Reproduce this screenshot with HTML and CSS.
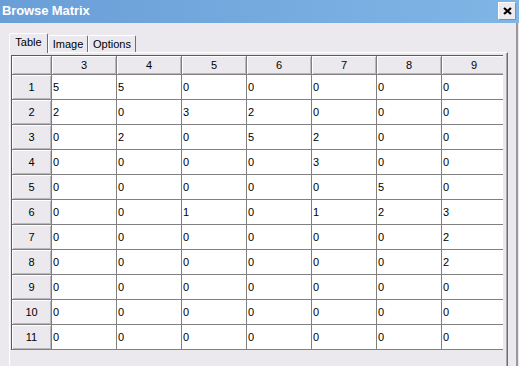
FILE: index.html
```html
<!DOCTYPE html>
<html>
<head>
<meta charset="utf-8">
<link rel="stylesheet" href="styles.css">
</head>
<body>
<div class="window">
  <div class="titlebar">
    <span class="title">Browse Matrix</span>
    <div class="close"><svg width="9" height="8" viewBox="0 0 9 8"><path d="M1 1 L8 7 M8 1 L1 7" stroke="#000" stroke-width="2.2" fill="none"/></svg></div>
  </div>
  <div class="content">
    <div class="tabs">
      <div class="tab active t1">Table</div>
      <div class="tab t2">Image</div>
      <div class="tab t3">Options</div>
    </div>
    <div class="panel">
      <div class="gridwrap">
        <div class="grid">
          <div class="hc"></div><div class="hc">3</div><div class="hc">4</div><div class="hc">5</div><div class="hc">6</div><div class="hc">7</div><div class="hc">8</div><div class="hc">9</div>
          <div class="rh">1</div><div class="c">5</div><div class="c">5</div><div class="c">0</div><div class="c">0</div><div class="c">0</div><div class="c">0</div><div class="c">0</div>
          <div class="rh">2</div><div class="c">2</div><div class="c">0</div><div class="c">3</div><div class="c">2</div><div class="c">0</div><div class="c">0</div><div class="c">0</div>
          <div class="rh">3</div><div class="c">0</div><div class="c">2</div><div class="c">0</div><div class="c">5</div><div class="c">2</div><div class="c">0</div><div class="c">0</div>
          <div class="rh">4</div><div class="c">0</div><div class="c">0</div><div class="c">0</div><div class="c">0</div><div class="c">3</div><div class="c">0</div><div class="c">0</div>
          <div class="rh">5</div><div class="c">0</div><div class="c">0</div><div class="c">0</div><div class="c">0</div><div class="c">0</div><div class="c">5</div><div class="c">0</div>
          <div class="rh">6</div><div class="c">0</div><div class="c">0</div><div class="c">1</div><div class="c">0</div><div class="c">1</div><div class="c">2</div><div class="c">3</div>
          <div class="rh">7</div><div class="c">0</div><div class="c">0</div><div class="c">0</div><div class="c">0</div><div class="c">0</div><div class="c">0</div><div class="c">2</div>
          <div class="rh">8</div><div class="c">0</div><div class="c">0</div><div class="c">0</div><div class="c">0</div><div class="c">0</div><div class="c">0</div><div class="c">2</div>
          <div class="rh">9</div><div class="c">0</div><div class="c">0</div><div class="c">0</div><div class="c">0</div><div class="c">0</div><div class="c">0</div><div class="c">0</div>
          <div class="rh">10</div><div class="c">0</div><div class="c">0</div><div class="c">0</div><div class="c">0</div><div class="c">0</div><div class="c">0</div><div class="c">0</div>
          <div class="rh">11</div><div class="c">0</div><div class="c">0</div><div class="c">0</div><div class="c">0</div><div class="c">0</div><div class="c">0</div><div class="c">0</div>
        </div>
      </div>
    </div>
  </div>
</div>
</body>
</html>
```
FILE: styles.css
```css
html, body {
  margin: 0;
  padding: 0;
}
body {
  background: #ebe9ed;
  font-family: "Liberation Sans", Arial, sans-serif;
  font-size: 11px;
  color: #000;
  width: 519px;
  height: 366px;
  overflow: hidden;
}
.window {
  width: 519px;
  height: 366px;
  display: flex;
  flex-direction: column;
}
.titlebar {
  height: 23px;
  flex: none;
  background: linear-gradient(to right, #6a9ed7, #7fb6e6);
  display: flex;
  align-items: flex-start;
  justify-content: space-between;
  padding: 0 3px 0 2px;
  box-sizing: border-box;
}
.title {
  color: #fff;
  font-weight: bold;
  font-size: 13px;
  margin-top: 3px;
  letter-spacing: -0.1px;
}
.close {
  margin-top: 2px;
  width: 18px;
  height: 18px;
  box-sizing: border-box;
  background: #ecebef;
  border: 1px solid;
  border-color: #fff #8c8c8c #8c8c8c #fff;
  display: flex;
  align-items: center;
  justify-content: center;
}
.content {
  flex: 1;
  width: 518px;
  box-sizing: border-box;
  border-right: 2px solid #9a989c;
  padding: 10px 0 0 9px;
  display: flex;
  flex-direction: column;
}
.tabs {
  display: flex;
  align-items: flex-end;
  height: 19px;
  flex: none;
  position: relative;
  z-index: 1;
}
.tab {
  box-sizing: border-box;
  height: 17px;
  border: 1px solid;
  border-bottom: none;
  border-color: #fff #6f6d72 transparent #fff;
  border-radius: 2px 2px 0 0;
  text-align: center;
  line-height: 13px;
  padding-top: 2px;
  background: #ebe9ed;
}
.tab.active {
  height: 20px;
  margin-bottom: -1px;
}
.t1 { width: 39px; }
.t2 { width: 40px; }
.t3 { width: 48px; }
.panel {
  width: 499px;
  flex: 1;
  box-sizing: border-box;
  border-top: 1px solid #fff;
  border-left: 1px solid #fff;
  border-right: 1px solid #6f6d72;
  box-shadow: inset -1px 0 0 #a9a7ab;
  padding: 2px 0 0 1px;
}
.gridwrap {
  width: 492px;
  height: 295px;
  box-sizing: border-box;
  border-left: 1px solid #5a5a5a;
  border-top: 1px solid #5a5a5a;
  overflow: hidden;
}
.grid {
  display: grid;
  width: max-content;
  grid-template-columns: 40px repeat(7, 65px);
  grid-template-rows: 19px repeat(11, 25px);
}
.hc, .rh {
  box-sizing: border-box;
  background: #ebe9ed;
  border-right: 1px solid #808080;
  border-bottom: 1px solid #808080;
  box-shadow: inset 1px 1px 0 #fff, inset -1px -1px 0 #b9b7bb;
  display: flex;
  align-items: center;
  justify-content: center;
}
.c {
  box-sizing: border-box;
  background: #fff;
  border-right: 1px solid #808080;
  border-bottom: 1px solid #808080;
  padding-left: 1px;
  display: flex;
  align-items: center;
}
```
